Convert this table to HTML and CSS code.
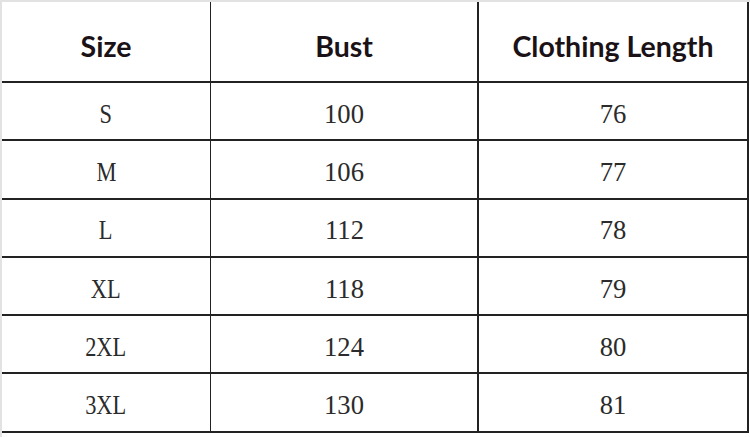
FILE: index.html
```html
<!DOCTYPE html>
<html>
<head>
<meta charset="utf-8">
<link rel="stylesheet" href="styles.css">
</head>
<body>
<div class="chart">
  <div class="cell head">Size</div>
  <div class="cell head">Bust</div>
  <div class="cell head">Clothing Length</div>
  <div class="cell"><span class="txt size">S</span></div><div class="cell"><span class="txt">100</span></div><div class="cell"><span class="txt">76</span></div>
  <div class="cell"><span class="txt size">M</span></div><div class="cell"><span class="txt">106</span></div><div class="cell"><span class="txt">77</span></div>
  <div class="cell"><span class="txt size">L</span></div><div class="cell"><span class="txt">112</span></div><div class="cell"><span class="txt">78</span></div>
  <div class="cell"><span class="txt size">XL</span></div><div class="cell"><span class="txt">118</span></div><div class="cell"><span class="txt">79</span></div>
  <div class="cell"><span class="txt size">2XL</span></div><div class="cell"><span class="txt">124</span></div><div class="cell"><span class="txt">80</span></div>
  <div class="cell"><span class="txt size">3XL</span></div><div class="cell"><span class="txt">130</span></div><div class="cell"><span class="txt">81</span></div>
</div>
</body>
</html>
```
FILE: styles.css
```css
html, body {
  margin: 0;
  padding: 0;
  background: #ffffff;
}
.chart {
  width: 750px;
  height: 437px;
  box-sizing: border-box;
  border-top: 2px solid #e2e2e2;
  border-left: 2px solid #e2e2e2;
  display: grid;
  grid-template-columns: 209px 268px 270px;
  grid-template-rows: 81px repeat(6, 58.3px);
}
.cell {
  display: flex;
  align-items: center;
  justify-content: center;
  border-bottom: 2px solid #222222;
  border-right: 2px solid #222222;
  font-family: "Liberation Serif", "DejaVu Serif", serif;
  font-size: 28px;
  color: #2b2b2b;
  padding-top: 5px;
  box-sizing: border-box;
}
.cell:nth-child(3n+1) {
  border-right-width: 1px;
}
.txt {
  display: inline-block;
  transform: scaleX(0.95);
}
.txt.size {
  transform: scaleX(0.8);
}
.head {
  font-family: Lato, "Liberation Sans", sans-serif;
  font-weight: 700;
  font-size: 28.5px;
  color: #1a1216;
  padding-top: 8px;
}
```
